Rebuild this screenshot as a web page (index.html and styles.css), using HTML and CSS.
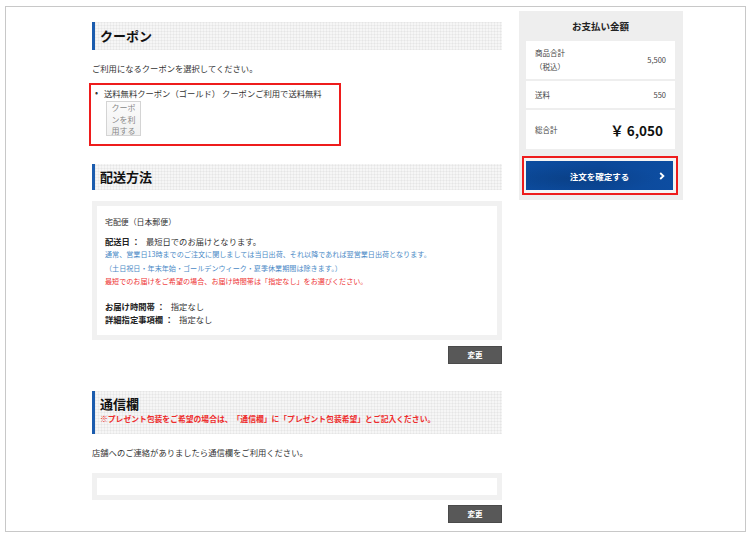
FILE: index.html
```html
<!DOCTYPE html>
<html lang="ja">
<head>
<meta charset="utf-8">
<title>注文確認</title>
<link rel="stylesheet" href="styles.css">
</head>
<body>
<div class="frame">
  <div class="main">
    <section class="coupon">
      <h2 class="heading">クーポン</h2>
      <p class="lead">ご利用になるクーポンを選択してください。</p>
      <div class="coupon-box">
        <div class="coupon-item"><span class="dot">•</span><span>送料無料クーポン（ゴールド） クーポンご利用で送料無料</span></div>
        <button class="use-btn">クーポンを利用する</button>
      </div>
    </section>

    <section class="delivery">
      <h2 class="heading">配送方法</h2>
      <div class="gray-box">
        <div class="white-box info">
          <p class="method">宅配便（日本郵便）</p>
          <p class="line"><b>配送日 ：</b> 最短日でのお届けとなります。</p>
          <p class="blue">通常、営業日13時までのご注文に関しましては当日出荷、それ以降であれば翌営業日出荷となります。</p>
          <p class="blue">（土日祝日・年末年始・ゴールデンウィーク・夏季休業期間は除きます。）</p>
          <p class="red">最短でのお届けをご希望の場合、お届け時間帯は「指定なし」をお選びください。</p>
          <p class="line gap"><b>お届け時間帯 ：</b> 指定なし</p>
          <p class="line"><b>詳細指定事項欄 ：</b> 指定なし</p>
        </div>
      </div>
      <div class="btn-row"><button class="change-btn">変更</button></div>
    </section>

    <section class="message">
      <div class="heading tall">
        <h2>通信欄</h2>
        <p class="note">※プレゼント包装をご希望の場合は、「通信欄」に「プレゼント包装希望」とご記入ください。</p>
      </div>
      <p class="lead2">店舗へのご連絡がありましたら通信欄をご利用ください。</p>
      <div class="gray-box"><div class="white-box field"></div></div>
      <div class="btn-row small"><button class="change-btn">変更</button></div>
    </section>
  </div>

  <aside class="side">
    <h3 class="side-title">お支払い金額</h3>
    <div class="rows">
      <div class="row r1"><span class="lbl">商品合計<br>（税込）</span><span class="val">5,500</span></div>
      <div class="row r2"><span class="lbl">送料</span><span class="val">550</span></div>
      <div class="row r3"><span class="lbl">総合計</span><span class="total">￥ 6,050</span></div>
    </div>
    <div class="confirm-wrap">
      <button class="confirm">注文を確定する<svg class="chev" width="6" height="8" viewBox="0 0 6 8"><path d="M1.2 1 L4.4 4 L1.2 7" fill="none" stroke="#fff" stroke-width="1.8"/></svg></button>
    </div>
  </aside>
</div>
</body>
</html>
```

FILE: styles.css
```css
* { box-sizing: border-box; }
html, body { margin: 0; padding: 0; background: #fff; }
body {
  font-family: "Noto Sans CJK JP", "Liberation Sans", sans-serif;
  color: #333;
  font-size: 8.3px;
}
p, h2, h3 { margin: 0; }
button { font-family: inherit; cursor: pointer; }

.frame {
  margin: 6px 0 0 5px;
  width: 741px;
  height: 526px;
  border: 1px solid #c8c8c8;
  display: flex;
  align-items: flex-start;
}

.main {
  margin-left: 86px;
  width: 410px;
  padding-top: 15px;
}

.heading {
  border-left: 3px solid #1b5cae;
  background:
    repeating-linear-gradient(0deg, rgba(0,0,0,0.035) 0 1px, transparent 1px 3px),
    repeating-linear-gradient(90deg, rgba(0,0,0,0.035) 0 1px, transparent 1px 3px),
    #f6f6f6;
  font-size: 13px;
  font-weight: bold;
  color: #111;
  padding-left: 5px;
  height: 28px;
  line-height: 28px;
}
.delivery .heading { height: 26px; line-height: 26px; }
.heading.tall {
  height: 43px;
  line-height: normal;
  padding-top: 4px;
}
.heading.tall h2 { font-size: 13px; line-height: 17px; }
.heading.tall .note {
  color: #ee2b2b;
  font-size: 7.8px;
  font-weight: bold;
  line-height: 12px;
  margin-top: 1px;
}

.lead { margin-top: 12px; line-height: 12px; }

.coupon-box {
  margin-top: 9px;
  margin-left: -3px;
  width: 252px;
  border: 2px solid #ee1c1c;
  padding: 2px 0 8px 4px;
}
.coupon-item { line-height: 12px; display: flex; }
.dot { width: 9px; font-size: 9px; }
.use-btn {
  margin: 2px 0 0 11px;
  width: 35px;
  height: 35px;
  padding: 0 4px;
  border: 1px solid #d4d4d4;
  background: linear-gradient(#fbfbfb, #f1f1f1);
  color: #888;
  font-size: 8px;
  line-height: 11.5px;
  text-align: center;
  word-break: break-all;
}

.delivery { margin-top: 18px; }
.gray-box {
  background: #f1f1f1;
  padding: 5px;
}
.delivery .gray-box { margin-top: 11px; }
.white-box { background: #fff; }
.info {
  padding: 9px 8px 8px 8px;
  line-height: 13.5px;
  font-size: 7.9px;
}
.info p { height: 13.5px; }
.info .method { margin-bottom: 6px; }
.info .line { font-size: 8.3px; }
.info b { font-weight: bold; color: #222; margin-right: 4px; }
.info .blue { color: #4b8ac6; font-size: 7.1px; }
.info .red { color: #ee3434; font-size: 7.1px; }
.info .gap { margin-top: 11px; }

.btn-row { display: flex; justify-content: flex-end; margin-top: 6px; }
.btn-row.small { margin-top: 5px; }
.change-btn {
  width: 54px;
  height: 18px;
  padding: 0;
  background: #585858;
  border: 1px solid #4a4a4a;
  color: #fff;
  font-size: 7.5px;
  font-weight: bold;
}

.message { margin-top: 27px; }
.lead2 { margin-top: 12px; line-height: 12px; }
.message .gray-box { margin-top: 15px; }
.field { height: 17px; }

.side {
  margin-left: 17px;
  margin-top: 4px;
  width: 164px;
  background: #eeeeee;
  padding: 0 8px 5px 7px;
}
.side-title {
  text-align: center;
  font-size: 9.5px;
  font-weight: bold;
  color: #222;
  height: 30px;
  line-height: 14px;
  padding-top: 8px;
}
.rows { display: flex; flex-direction: column; gap: 2px; }
.row {
  background: #fff;
  display: flex;
  justify-content: space-between;
  align-items: center;
  padding: 0 9px;
  font-size: 7.5px;
  color: #444;
}
.r1 { height: 38px; line-height: 14px; }
.r2 { height: 27px; }
.r3 { height: 39px; padding-right: 12px; }
.total { font-size: 13.5px; font-weight: bold; color: #111; }

.confirm-wrap {
  margin: 7px -3px 0 -4px;
  border: 2px solid #ee1c1c;
  padding: 3px 3px 3px 2px;
  background: #f4f4f4;
}
.confirm {
  width: 100%;
  height: 29px;
  border: none;
  background:
    radial-gradient(ellipse at 30% 60%, rgba(0,0,0,0.12), transparent 60%),
    linear-gradient(90deg, #0c4c9f, #0b4899 50%, #0d4da1);
  color: #fff;
  font-size: 8.5px;
  font-weight: bold;
  position: relative;
  padding: 0;
}
.chev {
  position: absolute;
  right: 8px;
  top: 50%;
  transform: translateY(-50%);
}
```
